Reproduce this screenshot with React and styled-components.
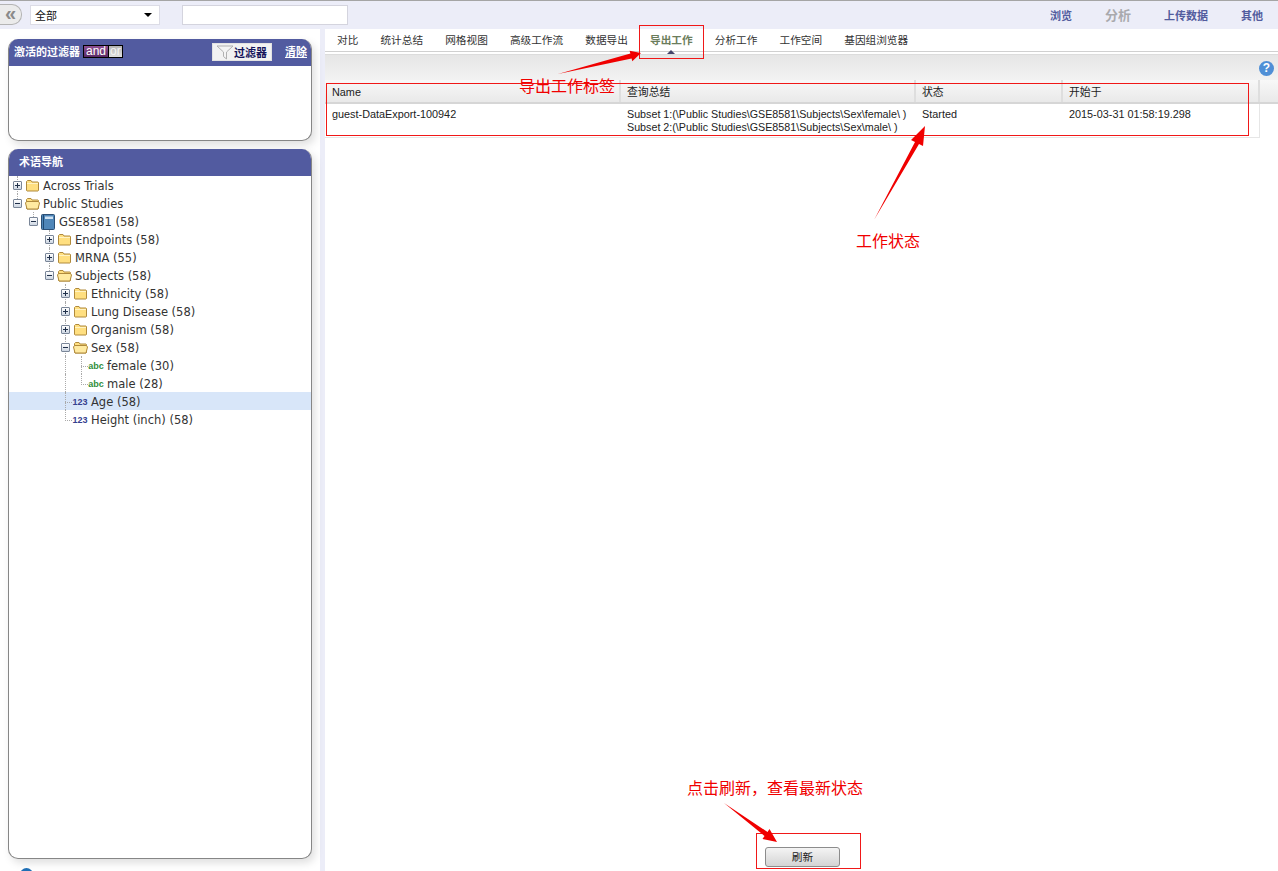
import React from "react"
import styled, { createGlobalStyle } from "styled-components"

const CJK = `"Liberation Sans", "Noto Sans CJK SC", sans-serif`

const GlobalStyle = createGlobalStyle`
  html, body {
    margin: 0;
    padding: 0;
    background: #fff;
    font-family: ${CJK};
    overflow: hidden;
  }
  * { box-sizing: border-box; }
`

const Page = styled.div`
  position: relative;
  width: 1278px;
  height: 871px;
  display: flex;
  flex-direction: column;
  overflow: hidden;
`

const TopBar = styled.div`
  height: 29px;
  flex: none;
  display: flex;
  align-items: center;
  background: #ecedf8;
  border-top: 1px solid #a5a5a5;
  padding-bottom: 1px;
`

const CollapseButton = styled.div`
  width: 22px;
  height: 21px;
  margin-right: 8px;
  border: 1px solid #b4b4b4;
  border-left: none;
  border-radius: 0 10px 10px 0;
  background: #ebebeb;
  color: #8a8a8a;
  font: bold 20px/16px "Liberation Sans", sans-serif;
  text-align: center;
`

const SelectBox = styled.div`
  width: 130px;
  height: 20px;
  margin-right: 22px;
  padding: 0 5px 0 4px;
  display: flex;
  align-items: center;
  justify-content: space-between;
  background: #fff;
  border: 1px solid #dcdce6;
  font-size: 11px;
  color: #111;
`

const Caret = styled.span`
  width: 0;
  height: 0;
  margin-right: 2px;
  border-left: 4px solid transparent;
  border-right: 4px solid transparent;
  border-top: 4px solid #000;
`

const SearchInput = styled.div`
  width: 166px;
  height: 20px;
  background: #fff;
  border: 1px solid #d4d4de;
`

const TopNav = styled.nav`
  margin-left: auto;
  display: flex;
  align-items: center;
  padding-right: 15px;
`

const TopNavItem = styled.span`
  margin-left: ${(props) => props.$gap}px;
  font-size: ${(props) => (props.$disabled ? 13 : 11)}px;
  font-weight: 700;
  color: ${(props) => (props.$disabled ? "#a9a9ad" : "#525c9e")};
`

const Body = styled.div`
  flex: 1;
  display: flex;
  min-height: 0;
`

const Sidebar = styled.aside`
  width: 320px;
  flex: none;
  padding: 10px 8px 0;
  display: flex;
  flex-direction: column;
  gap: 8px;
  background: #fff;
  position: relative;
`

const Panel = styled.section`
  height: ${(props) => props.$height}px;
  flex: none;
  display: flex;
  flex-direction: column;
  border-radius: 10px;
  background: #fff;
  border: 1px solid #868686;
  border-top: none;
  box-shadow: 3px 4px 8px rgba(0, 0, 0, 0.13);
  overflow: hidden;
`

const PanelHeader = styled.header`
  height: 27px;
  flex: none;
  margin: 0 -1px;
  display: flex;
  align-items: center;
  padding: 0 5px 3px ${(props) => props.$indent}px;
  background: #525ba0;
  color: #fff;
  font-size: 11px;
  font-weight: 700;
`

const AndOr = styled.span`
  margin: 1px 0 0 3px;
  display: flex;
  height: 13px;
  border: 1px solid #000;
  font: 400 12px/11px "Liberation Sans", sans-serif;
  color: #fff;
`

const AndPart = styled.span`
  padding: 0 2px;
  background: linear-gradient(#8e4f93, #5a2a66);
  border-right: 1px solid #000;
`

const OrPart = styled.span`
  padding: 0 1px;
  background: linear-gradient(#b4b4b4, #e0e0e0);
  color: #f4f4f4;
`

const FilterButton = styled.span`
  margin: 2px 0 0 auto;
  width: 60px;
  height: 18px;
  padding-right: 4px;
  display: flex;
  align-items: center;
  justify-content: space-between;
  background: #f2f2f2;
  border: 1px solid #e2e2e2;
  color: #14145a;
  font-size: 11px;
`

const ClearLink = styled.span`
  margin-left: 13px;
  text-decoration: underline;
  font-size: 11px;
`

const Tree = styled.div`
  flex: 1;
`

const TreeRow = styled.div`
  position: relative;
  height: 18px;
  display: flex;
  align-items: center;
  padding: 1px 0 0 ${(props) => props.$pad}px;
  background: ${(props) => (props.$selected ? "#d8e6f9" : "transparent")};
  font: 11.5px "DejaVu Sans", sans-serif;
  color: #333;
  white-space: nowrap;
`

const GuideV = styled.i`
  position: absolute;
  left: ${(props) => props.$x - 9}px;
  top: 0;
  height: ${(props) => (props.$half ? 9 : 18)}px;
  border-left: 1px dotted #aaa;
`

const GuideH = styled.i`
  position: absolute;
  left: ${(props) => props.$x - 9}px;
  top: 10px;
  width: 7px;
  border-top: 1px dotted #aaa;
`

const Toggle = styled.span`
  position: relative;
  z-index: 1;
  width: 9px;
  height: 9px;
  margin-right: 3px;
  flex: none;
  border: 1px solid #7a8698;
  border-radius: 1px;
  background: linear-gradient(#fff, #cdd6e2);
  &::before {
    content: "";
    position: absolute;
    left: 1px;
    top: 3px;
    width: 5px;
    height: 1px;
    background: #20304a;
  }
  &::after {
    content: "";
    display: ${(props) => (props.$open ? "none" : "block")};
    position: absolute;
    left: 3px;
    top: 1px;
    width: 1px;
    height: 5px;
    background: #20304a;
  }
`

const NodeLabel = styled.span`
  margin-left: ${(props) => (props.$book ? 4 : 3)}px;
`

const LeafTag = styled.span`
  width: 16px;
  flex: none;
  text-align: center;
  font: 700 9px "Liberation Sans", sans-serif;
  color: ${(props) => (props.$num ? "#35408f" : "#2f8f3a")};
`

const HelpDot = styled.span`
  position: absolute;
  left: 20px;
  top: 839px;
  width: 13px;
  height: 13px;
  border-radius: 50%;
  background: #1f6fb5;
`

const Strip = styled.div`
  width: 5px;
  flex: none;
  background: #ecedf8;
`

const Main = styled.main`
  flex: 1;
  min-width: 0;
  display: flex;
  flex-direction: column;
  background: #fff;
`

const Tabs = styled.div`
  height: 23px;
  flex: none;
  display: flex;
  align-items: center;
  gap: 22.1px;
  padding: 0 0 1px 12px;
  border-bottom: 1px solid #d0d0d0;
`

const Tab = styled.span`
  position: relative;
  font-size: 10.67px;
  font-weight: ${(props) => (props.$active ? 700 : 400)};
  color: ${(props) => (props.$active ? "#6b7d5c" : "#333")};
  &::after {
    content: "";
    display: ${(props) => (props.$active ? "block" : "none")};
    position: absolute;
    left: 50%;
    bottom: -7px;
    margin-left: -4px;
    border-left: 4px solid transparent;
    border-right: 4px solid transparent;
    border-bottom: 4px solid #45456b;
  }
`

const Toolbar = styled.div`
  height: 26px;
  flex: none;
  margin-top: 2px;
  display: flex;
  align-items: center;
  justify-content: flex-end;
  padding-right: 4px;
  background: linear-gradient(#e6e6e6, #f2f2f2);
  border-top: 1px solid #dcdcdc;
`

const HelpIcon = styled.span`
  width: 15px;
  height: 15px;
  margin-top: 2px;
  border-radius: 50%;
  background: #4f8fd6;
  color: #fff;
  font: 700 12px/15px "Liberation Sans", sans-serif;
  text-align: center;
`

const HeadRow = styled.div`
  height: 24px;
  flex: none;
  display: grid;
  grid-template-columns: 296px 295px 147px 197px 1fr;
  background: linear-gradient(#f8f8f8, #e9e9e9);
  border-bottom: 2px solid #d6d6d6;
`

const HeadCell = styled.div`
  padding: 5px 0 0 6px;
  font-size: 10.85px;
  line-height: 14px;
  color: #222;
  border-right: 2px solid #dedede;
  &:first-child { padding-left: 7px; }
  &:last-child { border-right: none; }
`

const DataRow = styled.div`
  width: 935px;
  height: 34px;
  flex: none;
  display: grid;
  grid-template-columns: 296px 295px 147px 197px;
  border-right: 1px solid #e6e6e6;
  border-bottom: 1px solid #e6e6e6;
`

const DataCell = styled.div`
  padding: 4px 0 0 6px;
  font-size: ${(props) => (props.$tight ? 10.73 : 10.85)}px;
  line-height: 13px;
  color: #222;
  white-space: nowrap;
  &:first-child { padding-left: 7px; }
`

const Footer = styled.div`
  margin-top: auto;
  height: 24px;
  flex: none;
  display: flex;
  justify-content: center;
  align-items: flex-start;
  padding-left: 2px;
`

const RefreshButton = styled.span`
  width: 75px;
  height: 20px;
  border: 1px solid #8c8c8c;
  border-radius: 3px;
  background: linear-gradient(#f4f4f4, #d4d4d4);
  font-size: 10.67px;
  line-height: 19px;
  text-align: center;
  color: #222;
`

const RedBox = styled.div`
  position: absolute;
  left: ${(props) => props.$x}px;
  top: ${(props) => props.$y}px;
  width: ${(props) => props.$w}px;
  height: ${(props) => props.$h}px;
  border: 1px solid #f01818;
  pointer-events: none;
`

const Note = styled.div`
  position: absolute;
  left: ${(props) => props.$x}px;
  top: ${(props) => props.$y}px;
  font-size: 16px;
  line-height: 20px;
  color: #f00000;
  white-space: nowrap;
`

const ArrowLayer = styled.svg`
  position: absolute;
  left: 0;
  top: 0;
  pointer-events: none;
`

const Folder = ({ open }) => (
  <svg width="15" height="13" viewBox="0 0 15 13" style={{ flex: "none" }}>
    <path
      d="M1.5 11.5V2.5L2.5 1.5H6L7 3H13L13.5 3.5V11.5L13 12H2Z"
      fill="#ffdf80"
      stroke="#b08a3c"
    />
    {open ? (
      <path d="M0.5 6L1.5 4.5H13.5L14.5 6L13 12H2Z" fill="#ffeaa0" stroke="#b08a3c" />
    ) : (
      <path d="M2 4.5H13" stroke="#fff3c4" />
    )}
  </svg>
)

const Book = () => (
  <svg width="14" height="16" viewBox="0 0 14 16" style={{ flex: "none" }}>
    <rect x="0.5" y="0.5" width="13" height="15" rx="1" fill="#4f86b8" stroke="#2c4f75" />
    <rect x="2" y="1" width="1" height="14" fill="#1f4a73" />
    <rect x="4" y="2.5" width="8" height="2.5" fill="#cfe2f3" />
  </svg>
)

const Funnel = () => (
  <svg width="18" height="15" viewBox="0 0 18 15" style={{ marginLeft: 3 }}>
    <path d="M1 1H17L10.5 7V14L7.5 11.5V7Z" fill="#f4f4f4" stroke="#b0b0b0" />
  </svg>
)

const treeRows = [
  { label: "Across Trials", level: 0, guides: [[17]] },
  { label: "Public Studies", level: 0, open: true, guides: [[17, true]] },
  { label: "GSE8581 (58)", level: 1, open: true, book: true, guides: [[33, true]] },
  { label: "Endpoints (58)", level: 2, guides: [[49]] },
  { label: "MRNA (55)", level: 2, guides: [[49]] },
  { label: "Subjects (58)", level: 2, open: true, guides: [[49, true]] },
  { label: "Ethnicity (58)", level: 3, guides: [[65]] },
  { label: "Lung Disease (58)", level: 3, guides: [[65]] },
  { label: "Organism (58)", level: 3, guides: [[65]] },
  { label: "Sex (58)", level: 3, open: true, guides: [[65]] },
  { label: "female (30)", level: 4, leaf: "abc", guides: [[65], [81]], stub: 81 },
  { label: "male (28)", level: 4, leaf: "abc", guides: [[65], [81, true]], stub: 81 },
  { label: "Age (58)", level: 3, leaf: "123", selected: true, guides: [[65]], stub: 65 },
  { label: "Height (inch) (58)", level: 3, leaf: "123", guides: [[65, true]], stub: 65 },
]

const tabs = [
  "对比",
  "统计总结",
  "网格视图",
  "高级工作流",
  "数据导出",
  "导出工作",
  "分析工作",
  "工作空间",
  "基因组浏览器",
]

const App = () => {
  return (
    <Page>
      <GlobalStyle />
      <TopBar>
        <CollapseButton>«</CollapseButton>
        <SelectBox>
          全部
          <Caret />
        </SelectBox>
        <SearchInput />
        <TopNav>
          <TopNavItem $gap={0}>浏览</TopNavItem>
          <TopNavItem $gap={33} $disabled>
            分析
          </TopNavItem>
          <TopNavItem $gap={33}>上传数据</TopNavItem>
          <TopNavItem $gap={33}>其他</TopNavItem>
        </TopNav>
      </TopBar>
      <Body>
        <Sidebar>
          <Panel $height={102}>
            <PanelHeader $indent={6}>
              激活的过滤器
              <AndOr>
                <AndPart>and</AndPart>
                <OrPart>or</OrPart>
              </AndOr>
              <FilterButton>
                <Funnel />
                过滤器
              </FilterButton>
              <ClearLink>清除</ClearLink>
            </PanelHeader>
          </Panel>
          <Panel $height={710}>
            <PanelHeader $indent={11}>术语导航</PanelHeader>
            <Tree>
              {treeRows.map((row) => (
                <TreeRow
                  key={row.label}
                  $pad={row.leaf ? 15 + 16 * row.level : 4 + 16 * row.level}
                  $selected={row.selected}
                >
                  {row.guides.map(([x, half]) => (
                    <GuideV key={x} $x={x} $half={half} />
                  ))}
                  {row.stub && <GuideH $x={row.stub} />}
                  {row.leaf ? (
                    <LeafTag $num={row.leaf === "123"}>{row.leaf}</LeafTag>
                  ) : (
                    <>
                      <Toggle $open={row.open} />
                      {row.book ? <Book /> : <Folder open={row.open} />}
                    </>
                  )}
                  <NodeLabel $book={row.book}>{row.label}</NodeLabel>
                </TreeRow>
              ))}
            </Tree>
          </Panel>
          <HelpDot />
        </Sidebar>
        <Strip />
        <Main>
          <Tabs>
            {tabs.map((tab) => (
              <Tab key={tab} $active={tab === "导出工作"}>
                {tab}
              </Tab>
            ))}
          </Tabs>
          <Toolbar>
            <HelpIcon>?</HelpIcon>
          </Toolbar>
          <HeadRow>
            <HeadCell>Name</HeadCell>
            <HeadCell>查询总结</HeadCell>
            <HeadCell>状态</HeadCell>
            <HeadCell>开始于</HeadCell>
            <HeadCell />
          </HeadRow>
          <DataRow>
            <DataCell>guest-DataExport-100942</DataCell>
            <DataCell $tight>
              Subset 1:(\Public Studies\GSE8581\Subjects\Sex\female\ )
              <br />
              Subset 2:(\Public Studies\GSE8581\Subjects\Sex\male\ )
            </DataCell>
            <DataCell>Started</DataCell>
            <DataCell>2015-03-31 01:58:19.298</DataCell>
          </DataRow>
          <Footer>
            <RefreshButton>刷新</RefreshButton>
          </Footer>
        </Main>
      </Body>

      {/* annotations drawn on top of the screenshot */}
      <RedBox $x={639} $y={25} $w={65} $h={34} />
      <RedBox $x={326} $y={83} $w={923} $h={53} />
      <RedBox $x={756} $y={833} $w={105} $h={36} />
      <Note $x={519} $y={77}>导出工作标签</Note>
      <Note $x={856} $y={232}>工作状态</Note>
      <Note $x={687} $y={779}>点击刷新，查看最新状态</Note>
      <ArrowLayer width="1278" height="871" viewBox="0 0 1278 871">
        <path d="M558 74L630.4 53.6L629.6 50.7L641 53L632.3 61.3L631.6 58.4Z" fill="#f00000" />
        <path d="M874 220L915 142L911 140L925 126L923 146L919 144Z" fill="#f00000" />
        <path d="M724 803L767.5 832L769.5 829L777 842L762.5 839L764.5 836Z" fill="#f00000" />
      </ArrowLayer>
    </Page>
  )
}

export default App
